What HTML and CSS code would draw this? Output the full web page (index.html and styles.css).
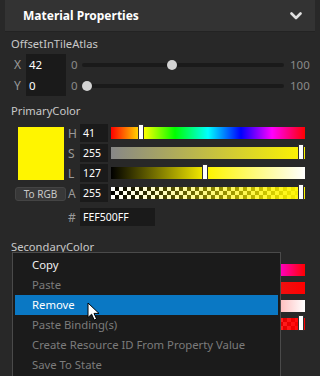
FILE: index.html
```html
<!DOCTYPE html>
<html lang="en">
<head>
  <meta charset="UTF-8" />
  <title>Material Properties</title>
  <link rel="stylesheet" href="styles.css">
</head>
<body>

  <div class="panel">
    <div class="header">
      <span class="title">Material Properties</span>
      <svg class="chevron" width="12" height="8" viewBox="0 0 12 8">
        <path d="M1.5 1.5 L6 6 L10.5 1.5" fill="none" stroke="#e0e0e0" stroke-width="2.6" stroke-linecap="round" stroke-linejoin="round"/>
      </svg>
    </div>

    <!-- OffsetInTileAtlas -->
    <div class="prop-label">OffsetInTileAtlas</div>
    <div class="vec-row">
      <span class="axis">X</span>
      <div class="num-input">42</div>
      <span class="range-min">0</span>
      <div class="track"><span class="knob" style="left: 42%"></span></div>
      <span class="range-max">100</span>
    </div>
    <div class="vec-row">
      <span class="axis">Y</span>
      <div class="num-input">0</div>
      <span class="range-min">0</span>
      <div class="track"><span class="knob" style="left: 0%"></span></div>
      <span class="range-max">100</span>
    </div>

    <!-- PrimaryColor -->
    <div class="prop-label color-label">PrimaryColor</div>
    <div class="color-editor">
      <div class="swatch-col">
        <div class="swatch"></div>
        <button class="mode-btn">To RGB</button>
      </div>
      <div class="channels">
        <div class="channel">
          <span class="ch-name">H</span>
          <div class="ch-input">41</div>
          <div class="bar bar-hue"><span class="thumb" style="left: 28px"></span></div>
        </div>
        <div class="channel">
          <span class="ch-name">S</span>
          <div class="ch-input">255</div>
          <div class="bar bar-sat"><span class="thumb" style="left: 188px"></span></div>
        </div>
        <div class="channel">
          <span class="ch-name">L</span>
          <div class="ch-input">127</div>
          <div class="bar bar-light"><span class="thumb" style="left: 92px"></span></div>
        </div>
        <div class="channel">
          <span class="ch-name">A</span>
          <div class="ch-input">255</div>
          <div class="bar bar-alpha"><span class="alpha-fill"></span><span class="thumb" style="left: 188px"></span></div>
        </div>
        <div class="channel hex-row">
          <span class="ch-name">#</span>
          <div class="ch-input hex-input">FEF500FF</div>
        </div>
      </div>
    </div>

    <!-- SecondaryColor (mostly hidden by the context menu) -->
    <div class="prop-label color-label secondary-label">SecondaryColor</div>
    <div class="color-editor secondary">
      <div class="swatch-col">
        <div class="swatch swatch-red"></div>
      </div>
      <div class="channels">
        <div class="channel">
          <span class="ch-name"></span>
          <div class="ch-input"></div>
          <div class="bar bar-hue"></div>
        </div>
        <div class="channel">
          <span class="ch-name"></span>
          <div class="ch-input"></div>
          <div class="bar bar-sat-red"></div>
        </div>
        <div class="channel">
          <span class="ch-name"></span>
          <div class="ch-input"></div>
          <div class="bar bar-light-red"></div>
        </div>
        <div class="channel">
          <span class="ch-name"></span>
          <div class="ch-input"></div>
          <div class="bar bar-alpha"><span class="alpha-fill alpha-red"></span><span class="thumb" style="left: 188px"></span></div>
        </div>
      </div>
    </div>
  </div>

  <!-- Context menu -->
  <ul class="context-menu">
    <li>Copy</li>
    <li class="disabled">Paste</li>
    <li class="active">Remove</li>
    <li class="disabled">Paste Binding(s)</li>
    <li class="disabled">Create Resource ID From Property Value</li>
    <li class="disabled">Save To State</li>
  </ul>

  <svg class="cursor" width="14" height="20" viewBox="0 0 14 20">
    <path d="M1 1 L1 15.5 L4.6 12.2 L7.2 18 L9.6 17 L7 11.4 L12 11.4 Z" fill="#ffffff" stroke="#000000" stroke-width="1" stroke-linejoin="round"/>
  </svg>

</body>
</html>
```

FILE: styles.css
```css
body {
  margin: 0;
  width: 320px;
  height: 376px;
  overflow: hidden;
  position: relative;
  background: #282828;
  color: #c8c8c8;
  font-family: 'Noto Sans', 'Open Sans', sans-serif;
  font-size: 11px;
}

.header {
  margin: 0 5px;
  height: 32px;
  background: #333333;
  border-bottom: 1px solid #232323;
  box-sizing: border-box;
  display: flex;
  align-items: center;
  justify-content: space-between;
  padding: 0 13px 0 18px;
}

.title {
  color: #ffffff;
  font-weight: bold;
  font-size: 12px;
}

.prop-label {
  padding-left: 11px;
  height: 20px;
  line-height: 20px;
  margin-top: 2px;
  font-size: 11.2px;
}

.vec-row {
  display: flex;
  align-items: center;
  height: 21px;
}

.axis {
  width: 12px;
  padding-left: 14px;
  color: #9a9a9a;
  font-size: 12px;
}

.num-input {
  width: 37px;
  height: 21px;
  line-height: 21px;
  padding-left: 3px;
  background: #1a1a1a;
  color: #ffffff;
  font-size: 11.5px;
}

.range-min {
  margin-left: 5px;
  width: 11px;
  color: #8a8a8a;
  font-size: 11.5px;
}

.track {
  position: relative;
  width: 202px;
  height: 4px;
  border-radius: 2px;
  background: #1a1a1a;
}

.knob {
  position: absolute;
  top: -3px;
  width: 10px;
  height: 10px;
  border-radius: 50%;
  background: #d4d4d4;
}

.range-max {
  margin-left: 6px;
  color: #8a8a8a;
  font-size: 11.5px;
}

.color-label {
  margin-top: 5px;
}

.secondary-label {
  margin-top: 11px;
}

.color-editor {
  display: flex;
  padding-left: 15px;
  margin-top: 3px;
}

.swatch-col {
  width: 51px;
  display: flex;
  flex-direction: column;
  align-items: center;
  padding-top: 3px;
}

.swatch {
  width: 46px;
  height: 53px;
  background: #fff500;
}

.swatch-red {
  background: #ff0000;
}

.mode-btn {
  margin-top: 7px;
  width: 51px;
  height: 14px;
  padding: 0;
  border: 1px solid #444;
  border-radius: 3px;
  background: #383838;
  color: #c8c8c8;
  font-family: inherit;
  font-size: 10px;
  line-height: 12px;
}

.channels {
  margin-left: 2px;
  display: flex;
  flex-direction: column;
  gap: 2px;
}

.channel {
  display: flex;
  align-items: center;
  height: 18px;
}

.ch-name {
  width: 12px;
  color: #9a9a9a;
  font-size: 12px;
}

.ch-input {
  width: 25px;
  height: 18px;
  line-height: 18px;
  padding-left: 3px;
  background: #1a1a1a;
  color: #ffffff;
  font-size: 10.5px;
}

.hex-row {
  margin-top: 4px;
}

.hex-input {
  width: 72px;
}

.bar {
  position: relative;
  margin-left: 3px;
  width: 194px;
  height: 12px;
}

.thumb {
  position: absolute;
  top: -2px;
  width: 4px;
  height: 14px;
  background: #ffffff;
  border: 1px solid #303030;
  margin-left: -1px;
  margin-top: -1px;
}

.bar-hue {
  background: linear-gradient(to right, #ff0000 0%, #ffff00 17%, #00ff00 33%, #00ffff 50%, #0000ff 67%, #ff00ff 83%, #ff0000 100%);
}

.bar-sat {
  background: linear-gradient(to right, #878787, #fff500);
}

.bar-light {
  background: linear-gradient(to right, #000000 0%, #fff500 50%, #ffffff 100%);
}

.bar-sat-red {
  background: linear-gradient(to right, #808080, #ff0000);
}

.bar-light-red {
  background: linear-gradient(to right, #000000 0%, #ff0000 50%, #ffffff 100%);
}

.bar-alpha {
  background-color: #ffffff;
  background-image:
    linear-gradient(45deg, #000 25%, transparent 25%, transparent 75%, #000 75%),
    linear-gradient(45deg, #000 25%, transparent 25%, transparent 75%, #000 75%);
  background-size: 8px 8px;
  background-position: 0 0, 4px 4px;
}

.alpha-fill {
  position: absolute;
  inset: 0;
  background: linear-gradient(to right, rgba(255, 245, 0, 0), rgba(255, 245, 0, 1));
}

.alpha-red {
  background: linear-gradient(to right, rgba(255, 0, 0, 0), rgba(255, 0, 0, 1));
}

.secondary {
  margin-top: 4px;
}

.secondary .channels {
  gap: 0;
}

.context-menu {
  position: absolute;
  left: 12px;
  top: 252px;
  width: 263px;
  height: 140px;
  margin: 0;
  padding: 2px 2px 0;
  list-style: none;
  background: #1b1b1b;
  border: 1px solid #4a4a4a;
}

.context-menu li {
  height: 20px;
  line-height: 20px;
  padding-left: 17px;
  color: #f0f0f0;
  font-size: 11.3px;
}

.context-menu li.disabled {
  color: #7c7c7c;
}

.context-menu li.active {
  background: #0a78c4;
  color: #ffffff;
}

.cursor {
  position: absolute;
  left: 87px;
  top: 302px;
}
```
